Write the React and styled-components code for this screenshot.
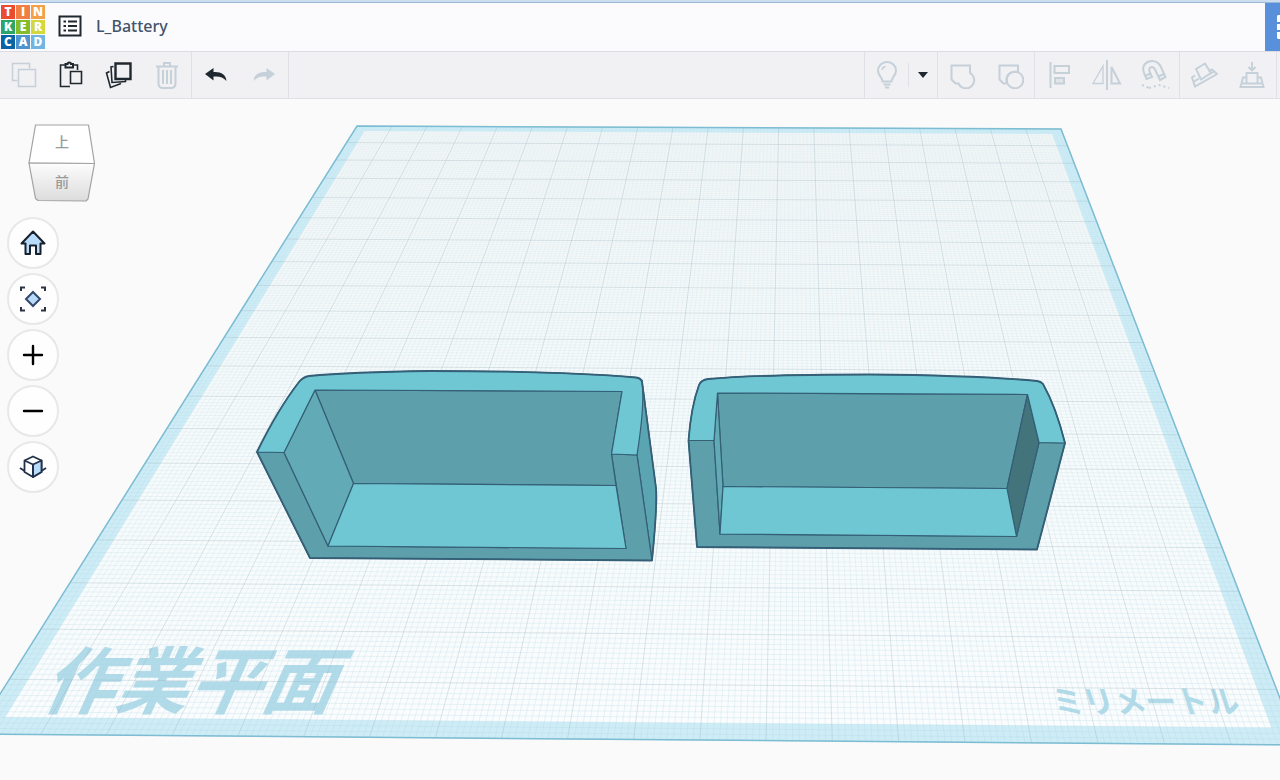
import React from "react";
import styled, { createGlobalStyle } from "styled-components";

const GlobalStyle = createGlobalStyle`
  * { box-sizing: border-box; }
  body {
    margin: 0;
    background: #fafafa;
    font-family: "Noto Sans", "Noto Sans CJK JP", sans-serif;
  }
`;

const Page = styled.div`
  display: flex;
  flex-direction: column;
  min-height: 100vh;
  overflow: hidden;
`;

const TopEdge = styled.div`
  height: 3px;
  background: #cbddef;
  border-bottom: 1px solid #9bb8d6;
`;

const Header = styled.header`
  display: flex;
  justify-content: space-between;
  height: 49px;
  background: #fbfbfd;
  border-bottom: 1px solid #dadce2;
`;

const Brand = styled.div`
  display: flex;
  align-items: center;
  padding: 0 0 2px 1px;
`;

const Logo = styled.a`
  display: grid;
  grid-template-columns: repeat(3, 14px);
  grid-auto-rows: 14px;
  align-self: flex-end;
  gap: 1px;
  text-decoration: none;
`;

const Tile = styled.span`
  background: ${(p) => p.$color};
  color: #fff;
  font: 800 12px/14px "Open Sans", sans-serif;
  text-align: center;
`;

const IconButton = styled.button`
  display: flex;
  align-items: center;
  justify-content: center;
  width: ${(p) => p.$width || 48}px;
  height: 45px;
  padding: 0;
  border: 0;
  background: none;
  color: ${(p) => (p.$muted ? "#c5d0d9" : "#20282f")};
  cursor: pointer;
`;

const Title = styled.h1`
  margin: 0;
  padding: 0 0 1px 1px;
  color: #43536a;
  font-size: 16px;
  font-weight: 500;
  line-height: 24px;
`;

const PanelButton = styled.button`
  display: flex;
  align-items: center;
  justify-content: flex-end;
  width: 15px;
  padding: 0;
  border: 0;
  background: #5990dc;
`;

const Toolbar = styled.div`
  display: flex;
  justify-content: space-between;
  height: 47px;
  padding-right: 3px;
  background: #f1f1f4;
  border-bottom: 1px solid #dfe0e4;
`;

const Cluster = styled.div`
  display: flex;
  border-left: ${(p) => (p.$edge ? "1px solid #dfe1e6" : "0")};
`;

const Group = styled.div`
  display: flex;
  align-items: center;
  border-right: 1px solid #dfe1e6;
`;

const Separator = styled.span`
  width: 1px;
  height: 24px;
  background: #dfe1e6;
`;

const Workspace = styled.main`
  display: grid;
  flex: 1;
  align-items: start;
  background: #fafafa;

  > * { grid-area: 1 / 1; }
`;

const Scene = styled.svg`
  display: block;
  width: 100%;
  height: auto;
`;

const ViewControls = styled.nav`
  display: flex;
  flex-direction: column;
  align-items: flex-start;
  justify-self: start;
  gap: 4px;
  padding: 24px 0 0 7px;
  z-index: 1;
`;

const CubeButton = styled.button`
  display: flex;
  margin: 0 0 10px 20px;
  padding: 0;
  border: 0;
  background: none;
`;

const RoundButton = styled.button`
  display: flex;
  align-items: center;
  justify-content: center;
  width: 52px;
  height: 52px;
  padding: 0;
  border: 2px solid #e8e8ea;
  border-radius: 50%;
  background: #fefefe;
`;

const tiles = [
  ["T", "#ea4c2d"], ["I", "#f17f45"], ["N", "#f3a04a"],
  ["K", "#2ba568"], ["E", "#85bd28"], ["R", "#d5d83a"],
  ["C", "#0a63a5"], ["A", "#4f94cf"], ["D", "#72b4e2"],
];

function Icon({ w = 28, h = 28, sw = 2, children }) {
  return (
    <svg width={w} height={h} viewBox={`0 0 ${w} ${h}`} fill="none" stroke="currentColor" strokeWidth={sw} aria-hidden="true">
      {children}
    </svg>
  );
}

const CopyIcon = () => (
  <Icon sw={1.5}>
    <path d="M7.5 19.500H2.500V2.500H19.500V7.500" /><path d="M8.500 8.500H25.500V25.500H8.500Z" />
  </Icon>
);
const PasteIcon = () => (
  <Icon sw={1.6}>
    <path d="M13 25.500H3.500V4H8M17 4H20.500V9" />
    <path d="M8.500 3H10.500C10.500 1 14 1 14 3H16V6.500H8.500Z" strokeWidth="2" />
    <path d="M13.500 10.500H24.500V22.500H13.500Z" />
  </Icon>
);
const DuplicateIcon = () => (
  <Icon sw={1.6}>
    <path d="M10.500 2.500H25.500V18H10.500Z" strokeWidth="2.400" />
    <path d="M8.500 5.500L6 6L7 21.500L20.500 20.500V19" />
    <path d="M4.500 10.500L1.500 12L5.500 26.500L16 22.500" />
  </Icon>
);
const TrashIcon = () => (
  <Icon>
    <path d="M3 5.500H25M11 5V2H17V5M5.500 6V22Q5.500 27 10 27H18Q22.500 27 22.500 22V6M10 9V23M14 9V23M18 9V23" />
  </Icon>
);
const UndoIcon = () => (
  <Icon w={24} h={24} sw={0}>
    <path d="M1 11L9.500 5V9C17 8.500 22 11.500 22.500 18C19 14 15.500 13 9.500 13.500V17.500Z" fill="currentColor" />
  </Icon>
);
const RedoIcon = () => (
  <Icon w={24} h={24} sw={0}>
    <path d="M23 11L14.500 5V9C7 8.500 2 11.500 1.500 18C5 14 8.500 13 14.500 13.500V17.500Z" fill="currentColor" />
  </Icon>
);
const BulbIcon = () => (
  <Icon>
    <path d="M9.500 20.500C9.500 16.500 5 15 5 9.500A9 8.500 0 0 1 23 9.500C23 15 18.500 16.500 18.500 20.500ZM10.500 23.500H17.500M12 26.500H16" />
    <path d="M9 9Q9.500 6 12.500 5.500" strokeWidth="1.500" />
  </Icon>
);
const CaretIcon = () => (
  <Icon w={12} h={8} sw={0}><path d="M1 1H11L6 7Z" fill="#20282f" /></Icon>
);
const GroupIcon = () => (
  <Icon>
    <path d="M3.500 4.500H22V12A8.200 8.200 0 1 1 10.500 22.500H7.500L3.500 18.500Z" />
  </Icon>
);
const UngroupIcon = () => (
  <Icon>
    <path d="M10.500 22.500H7.500L3.500 18.500V4.500H22V11M22 11C15.500 9.500 10.500 13 10.500 19V22.500" />
    <circle cx="19" cy="19" r="8.300" />
  </Icon>
);
const AlignIcon = () => (
  <Icon>
    <path d="M5.500 1V27M9.500 5H24V12H9.500Z" /><path d="M10 17H19V22.500H10Z" fill="#e0e6ea" />
  </Icon>
);
const MirrorIcon = () => (
  <Icon w={32} h={30}>
    <path d="M16 0V30" /><path d="M12 6V23.500H2Z" strokeWidth="1.300" /><path d="M20.500 7V23.500H29Z" />
  </Icon>
);
const MagnetIcon = () => (
  <Icon w={30} h={30}>
    <path d="M6.500 19L4 13C1 5 7 1 12 1C17 1 19.500 4 21 7L25.500 17L20 20L15 9.500C13 5.500 8 7 9.500 11.500L12 17ZM5 16L10.500 13.500M18.500 16.500L24 14" />
    <path d="M2 25L9 28M9 28L19 25L29 28" strokeWidth="2" strokeDasharray="2 3" />
  </Icon>
);
const CruiseIcon = () => (
  <Icon>
    <path d="M6 8L15 2.500L21 12L11 18.500ZM5 14.500L2 16.500L5 25.500L27 13L22 8.500L18.500 10.500M4 20.500L9 17.500M18 14L24 10.500" />
  </Icon>
);
const DropIcon = () => (
  <Icon sw={1.900}>
    <path d="M14 1V9M10.500 6L14 9.500L17.500 6M8.500 12H19.500V22.500H8.500ZM8 16.500H5L2.500 26H25.500L23 16.500H20M4.500 22.500H23.500" />
  </Icon>
);

const HomeIcon = () => (
  <Icon w={28} h={28}>
    <path d="M14 2.500L2.500 14.500H6.500V25H11V16.500H17V25H21.500V14.500H25.500Z" fill="#b9dbfa" stroke="#17202c" strokeLinejoin="round" />
  </Icon>
);
const FitIcon = () => (
  <Icon w={28} h={28}>
    <path d="M2 6V2.500H6M22 2.500H26V6M26 22V25.500H22M6 25.500H2V22" stroke="#2b3440" />
    <path d="M14 7L21 14L14 21L7 14Z" fill="#b9dbfa" stroke="#34496a" />
  </Icon>
);
const PlusIcon = () => (
  <Icon w={24} h={24} sw={2.400}><path d="M12 3V21M3 12H21" stroke="#000" strokeLinecap="round" /></Icon>
);
const MinusIcon = () => (
  <Icon w={24} h={24} sw={2.400}><path d="M3 12H21" stroke="#000" strokeLinecap="round" /></Icon>
);
const OrthoIcon = () => (
  <Icon w={28} h={28}>
    <g stroke="#22324a" strokeWidth="1.800" strokeLinejoin="round">
      <path d="M1 15L14 23.500L27 15" />
      <path d="M5.500 7.500L14 3.500L22.500 7.500V19L14 24L5.500 19Z" fill="#fff" />
      <path d="M14 11.500L22.500 7.500V19L14 24Z" fill="#b9dbfa" />
      <path d="M5.500 7.500L14 11.500V24" />
    </g>
  </Icon>
);

const viewButtons = [
  ["ホームビュー", HomeIcon],
  ["すべてをビューに合わせる", FitIcon],
  ["ズームイン", PlusIcon],
  ["ズームアウト", MinusIcon],
  ["正投影ビュー", OrthoIcon],
];

/* Perspective projection of the 200 mm workplane; u and v run from 0 to 1. */
const corners = [[357, 126], [1061, 129], [1298, 745], [-25, 734]];

function makeProjection([[x0, y0], [x1, y1], [x2, y2], [x3, y3]]) {
  const dx1 = x1 - x2, dx2 = x3 - x2, sx = x0 - x1 + x2 - x3;
  const dy1 = y1 - y2, dy2 = y3 - y2, sy = y0 - y1 + y2 - y3;
  const det = dx1 * dy2 - dx2 * dy1;
  const g = (sx * dy2 - dx2 * sy) / det;
  const h = (dx1 * sy - sx * dy1) / det;
  return (u, v) => {
    const w = g * u + h * v + 1;
    return [
      ((x1 - x0 + g * x1) * u + (x3 - x0 + h * x3) * v + x0) / w,
      ((y1 - y0 + g * y1) * u + (y3 - y0 + h * y3) * v + y0) / w,
    ].map((n) => n.toFixed(2)).join(" ");
  };
}

const project = makeProjection(corners);

function gridPath(count, skipEvery) {
  let d = "";
  for (let i = 0; i <= count; i += 1) {
    if (skipEvery && i % skipEvery === 0) continue;
    const t = i / count;
    d += `M${project(t, 0)}L${project(t, 1)}M${project(0, t)}L${project(1, t)}`;
  }
  return d;
}

const quad = (m) =>
  `M${project(m, m)}L${project(1 - m, m)}L${project(1 - m, 1 - m)}L${project(m, 1 - m)}Z`;

const minorGrid = gridPath(200, 10);
const majorGrid = gridPath(20);

const TOP = "#6fc7d4";
const FRONT = "#5d9fab";
const SIDE = "#62aab5";
const DARK = "#43737b";

const Workplane = () => (
  <g>
    <defs>
      <linearGradient id="plane" x1="0" y1="0" x2="0" y2="1">
        <stop offset="0" stopColor="#f3f6f7" />
        <stop offset="0.5" stopColor="#f6fafb" />
        <stop offset="1" stopColor="#fafcfd" />
      </linearGradient>
      <linearGradient id="minor" gradientUnits="userSpaceOnUse" x1="0" y1="126" x2="0" y2="745">
        <stop offset="0" stopColor="#a9d2e0" stopOpacity="0.1" />
        <stop offset="0.5" stopColor="#a9d2e0" stopOpacity="0.18" />
        <stop offset="1" stopColor="#a9d2e0" stopOpacity="0.25" />
      </linearGradient>
    </defs>
    <path d={quad(0)} fill="#cdecf6" />
    <path d={quad(0.015)} fill="url(#plane)" />
    <g fill="#b2dbe9" fontFamily='"Noto Sans CJK JP", sans-serif' fontWeight="700">
      <text transform="translate(40 708) skewX(-24)" fontSize="73">作業平面</text>
      <text transform="translate(1056 713) skewX(18)" fontSize="31">ミリメートル</text>
    </g>
    <path d={minorGrid} stroke="url(#minor)" fill="none" />
    <path d={majorGrid} stroke="#8eabb8" strokeOpacity="0.3" fill="none" />
    <path d={quad(0)} stroke="#7dbdd3" strokeWidth="1.500" fill="none" />
  </g>
);

const Solids = () => (
  <g stroke="#345f76" strokeWidth="1.200" strokeLinejoin="round">
    <path d="M642 380L656 488Q657.500 505 652 560.500L637 455Z" fill="#5ba5b3" />
    <path d="M257 452L284 452.500L328 546L626 548.500L611.500 454L637 455L652 560.500L310 558Z" fill={FRONT} />
    <path d="M315 390L622 391.500L611.500 454L616 485.500L353.500 483.500Z" fill={FRONT} />
    <path d="M315 390L353.500 483.500L328 546L284 452.500Z" fill={SIDE} />
    <path d="M353.500 483.500L616 485.500L626 548.500L328 546Z" fill={TOP} />
    <path d="M257 452Q278 409 299 382Q303 377 309 376Q350 372 430 371Q560 371 636 377.500Q641 378 642 382Q645 404 637 455L611.500 454L622 391.500L315 390L284 452.500Z" fill={TOP} />
    <path d="M257 452Q278 409 299 382Q303 377 309 376Q350 372 430 371Q560 371 636 377.500Q641 378 642 382L656 488Q657.500 505 652 560.500L310 558Z" fill="none" strokeWidth="1.800" />

    <path d="M688.500 440.500H714L720 534L1016.500 536.500L1039 442.500L1065 443L1037 549.500L697 547Z" fill={FRONT} />
    <path d="M717.500 393L1027.500 394.500L1007 488.500L723 486.500Z" fill={FRONT} />
    <path d="M717.500 393L723 486.500L720 534L714 440.500Z" fill={SIDE} />
    <path d="M1027.500 394.500L1039 442.500L1016.500 536.500L1007 488.500Z" fill={DARK} />
    <path d="M723 486.500L1007 488.500L1016.500 536.500L720 534Z" fill={TOP} />
    <path d="M688.500 440.500Q691 407 699 385Q701 380 708 379Q760 374.500 870 374.500Q980 375.500 1037 381Q1041 381.500 1043 384Q1056 407 1065 443L1039 442.500L1027.500 394.500L717.500 393L714 440.500Z" fill={TOP} />
    <path d="M688.500 440.500Q691 407 699 385Q701 380 708 379Q760 374.500 870 374.500Q980 375.500 1037 381Q1041 381.500 1043 384Q1056 407 1065 443L1037 549.500L697 547Z" fill="none" strokeWidth="1.800" />
  </g>
);

const ViewCube = () => (
  <svg width="70" height="80" viewBox="0 0 70 80" aria-hidden="true">
    <defs>
      <linearGradient id="cubeFront" x1="0" y1="0" x2="0" y2="1">
        <stop offset="0" stopColor="#fdfdfd" />
        <stop offset="1" stopColor="#dcdcdc" />
      </linearGradient>
    </defs>
    <g stroke="#a2a2a2" strokeWidth="1.200" strokeLinejoin="round">
      <path d="M8.500 2H61.500L67.500 40.500L2 40Z" fill="#fff" />
      <path d="M2 40L67.500 40.500L61 76L59 78L11 77.500L8.500 75.500Z" fill="url(#cubeFront)" />
    </g>
    <g fill="#999" fontFamily='"Noto Sans CJK JP", sans-serif' fontSize="14" fontWeight="500" textAnchor="middle">
      <text x="35" y="24">上</text>
      <text x="35" y="64">前</text>
    </g>
  </svg>
);

const Tool = ({ label, icon: Glyph, muted, width }) => (
  <IconButton type="button" aria-label={label} $muted={muted} $width={width}><Glyph /></IconButton>
);

export default function App() {
  return (
    <Page>
      <GlobalStyle />
      <TopEdge />
      <Header>
        <Brand>
          <Logo href="#" aria-label="Tinkercad">
            {tiles.map(([letter, color]) => <Tile key={letter} $color={color}>{letter}</Tile>)}
          </Logo>
          <IconButton type="button" aria-label="デザイン一覧" $width={50}>
            <Icon w={24} h={22}>
              <path d="M1.500 1.500H22.500V20.500H1.500Z" />
              <path d="M5.500 6.500H8M5.500 11H8M5.500 15.500H8M10 6.500H19M10 11H19M10 15.500H19" />
            </Icon>
          </IconButton>
          <Title>L_Battery</Title>
        </Brand>
        <PanelButton type="button" aria-label="パネル">
          <svg width="3" height="26" viewBox="0 0 3 26" aria-hidden="true">
            <path d="M1 1H3V8H0V2ZM0 10H3V16H0ZM0 18H3V25H1L0 24Z" fill="#fff" />
          </svg>
        </PanelButton>
      </Header>
      <Toolbar role="toolbar">
        <Cluster>
          <Group>
            <Tool label="コピー" icon={CopyIcon} muted width={47} />
            <Tool label="貼り付け" icon={PasteIcon} />
            <Tool label="複製" icon={DuplicateIcon} />
            <Tool label="削除" icon={TrashIcon} muted />
          </Group>
          <Group>
            <Tool label="元に戻す" icon={UndoIcon} />
            <Tool label="やり直し" icon={RedoIcon} muted />
          </Group>
        </Cluster>
        <Cluster $edge>
          <Group>
            <Tool label="すべて表示" icon={BulbIcon} muted width={43} />
            <Separator />
            <Tool label="表示オプション" icon={CaretIcon} width={28} />
          </Group>
          <Group>
            <Tool label="グループ化" icon={GroupIcon} muted />
            <Tool label="グループ解除" icon={UngroupIcon} muted />
          </Group>
          <Group>
            <Tool label="整列" icon={AlignIcon} muted />
            <Tool label="反転" icon={MirrorIcon} muted />
            <Tool label="スナップ" icon={MagnetIcon} muted />
          </Group>
          <Group>
            <Tool label="クルーズ" icon={CruiseIcon} muted />
            <Tool label="ドロップ" icon={DropIcon} muted />
          </Group>
        </Cluster>
      </Toolbar>
      <Workspace>
        <Scene viewBox="0 99 1280 681" role="img" aria-label="作業平面">
          <Workplane />
          <Solids />
        </Scene>
        <ViewControls>
          <CubeButton type="button" aria-label="ビューキューブ"><ViewCube /></CubeButton>
          {viewButtons.map(([label, Glyph]) => (
            <RoundButton key={label} type="button" aria-label={label}><Glyph /></RoundButton>
          ))}
        </ViewControls>
      </Workspace>
    </Page>
  );
}
